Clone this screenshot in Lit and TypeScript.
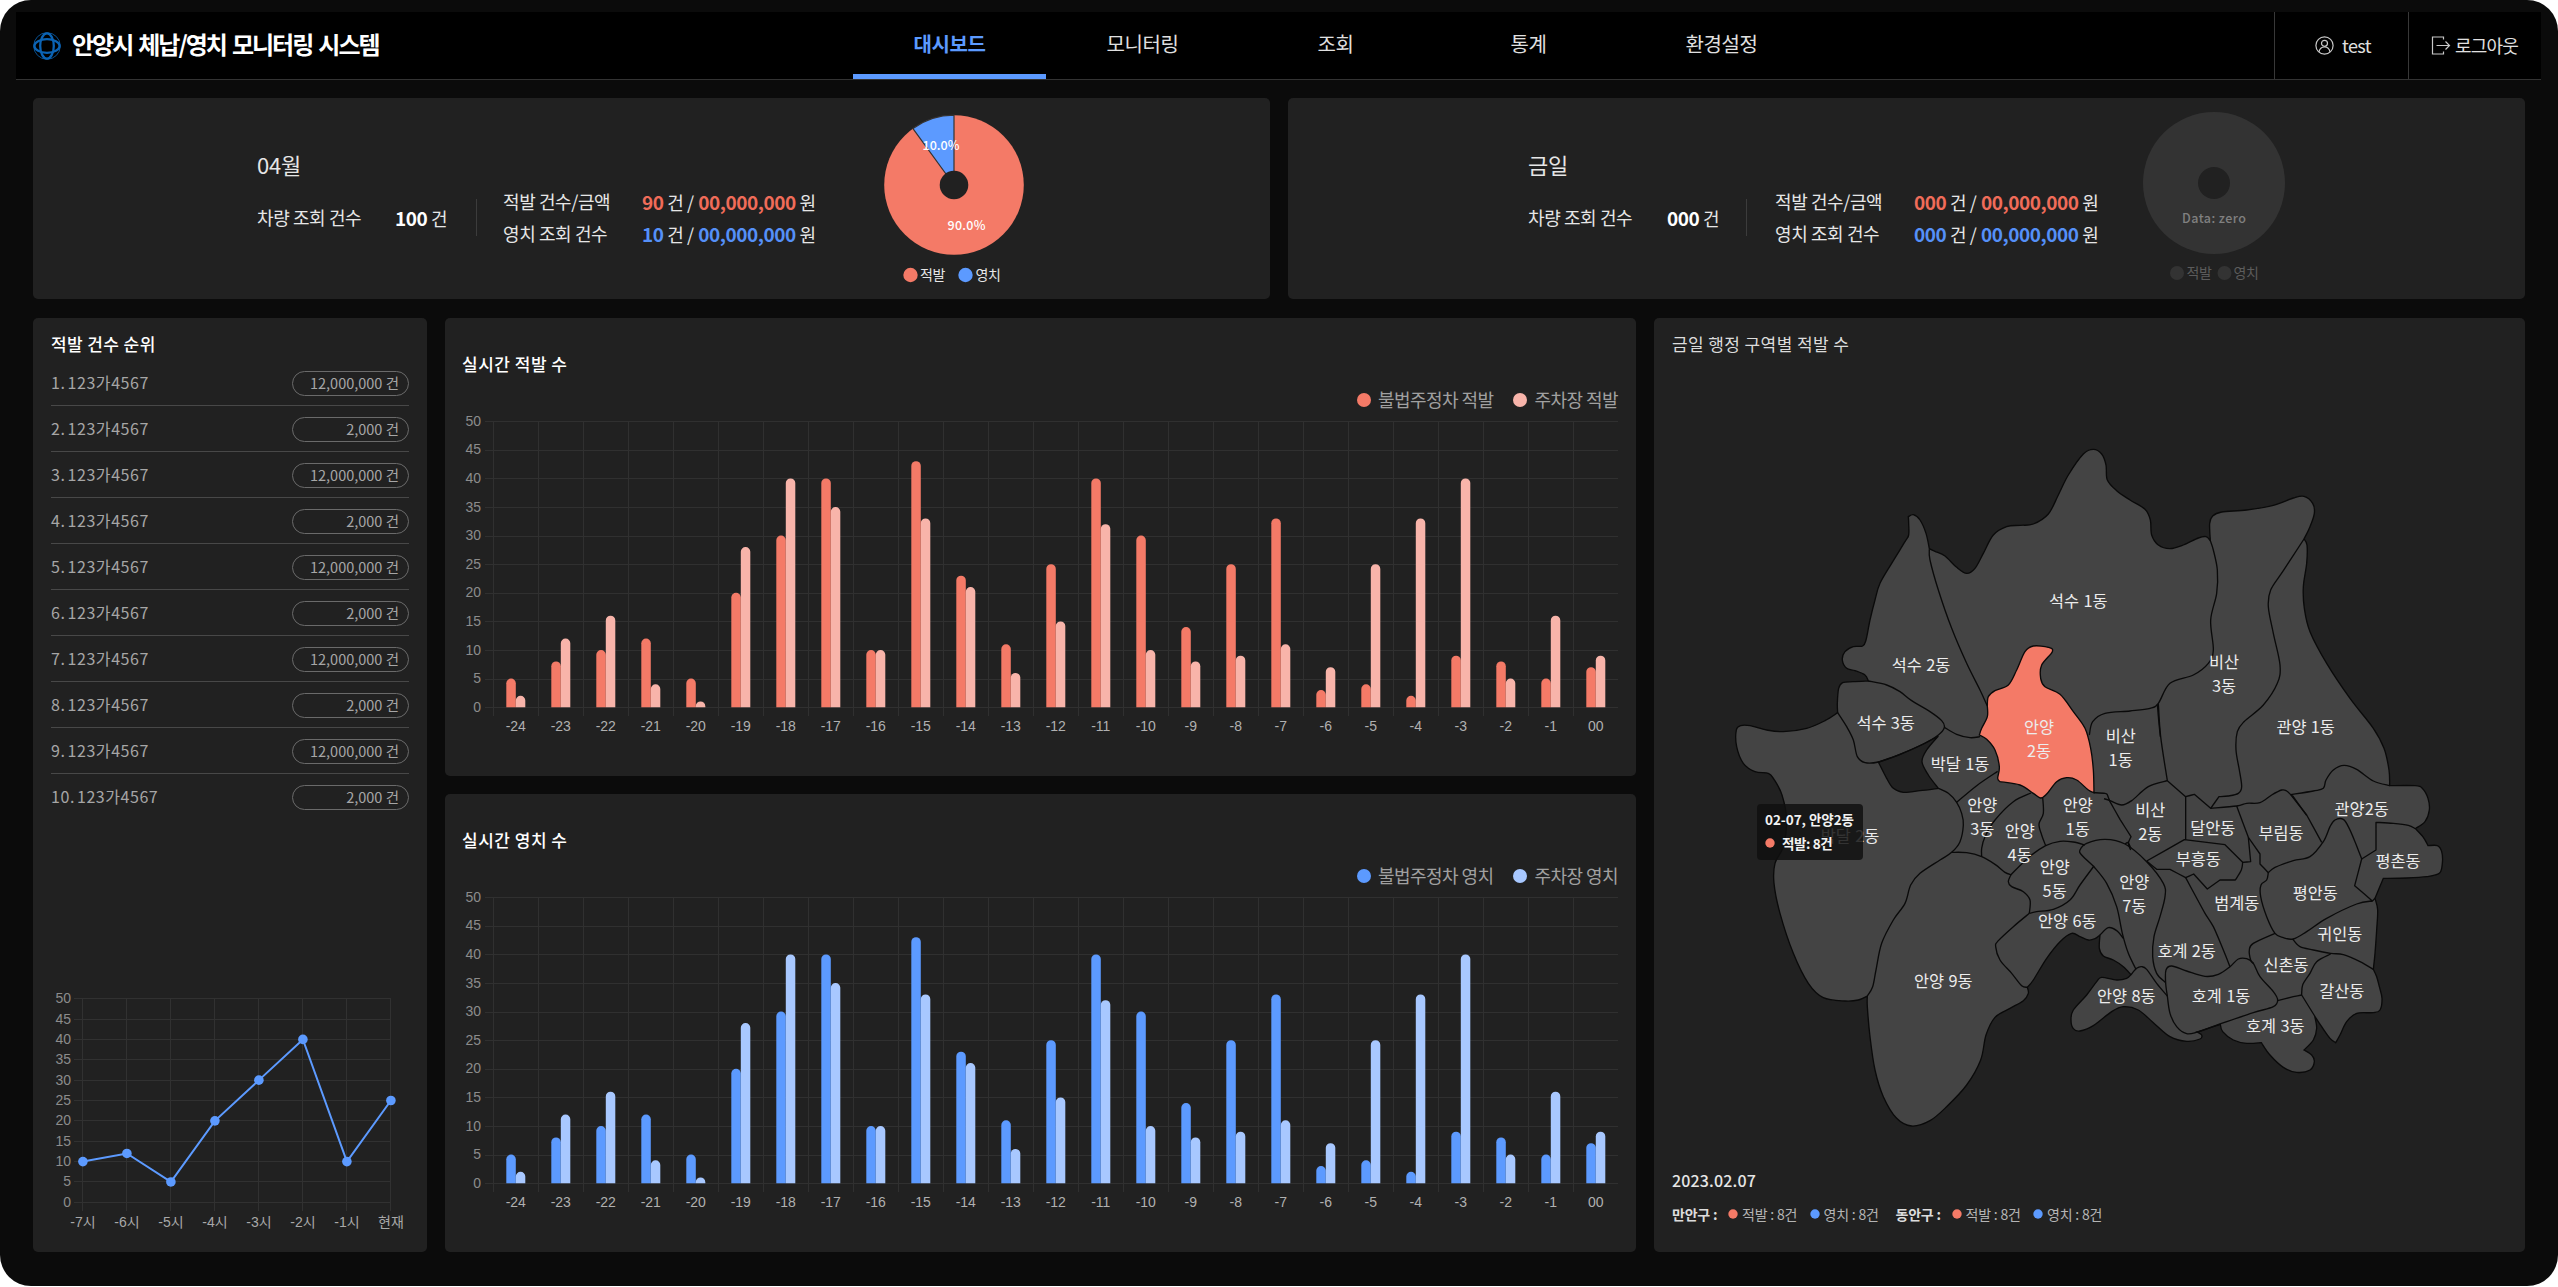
import { LitElement, html, svg, css } from "lit";
import { customElement, property } from "lit/decorators.js";
import { classMap } from "lit/directives/class-map.js";

const RED = "#f47a67";
const PINK = "#f8b4aa";
const BLUE = "#5c9aff";
const SKY = "#a8c8ff";

const base = css`
  :host {
    display: block;
    box-sizing: border-box;
    font-family: "Noto Sans CJK KR", "Noto Sans", sans-serif;
  }
  * {
    box-sizing: border-box;
  }
  svg {
    display: block;
  }
`;

/* ---------- bar chart card ---------- */

const HOURLY: [number, number][] = [
  [5, 2], [8, 12], [10, 16], [12, 4], [5, 1], [20, 28], [30, 40], [40, 35], [10, 10],
  [43, 33], [23, 21], [11, 6], [25, 15], [40, 32], [30, 10], [14, 8], [25, 9], [33, 11],
  [3, 7], [4, 25], [2, 33], [9, 40], [8, 5], [5, 16], [7, 9],
];

const TICKS = [0, 5, 10, 15, 20, 25, 30, 35, 40, 45, 50];

@customElement("bar-card")
class BarCard extends LitElement {
  @property() heading = "";
  @property({ attribute: false }) names: string[] = [];
  @property({ attribute: false }) colors: string[] = [];

  static styles = [
    base,
    css`
      :host {
        background: #212121;
        border-radius: 5px;
        padding: 34px 18px 0;
        height: 458px;
      }
      .title {
        font-size: 17px;
        line-height: 24px;
        letter-spacing: 0.5px;
        margin-left: -1px;
        font-weight: 500;
        color: #fff;
      }
      .legend {
        margin-top: 11px;
        margin-bottom: 1px;
        height: 25px;
        display: flex;
        justify-content: flex-end;
        gap: 20px;
        color: #a0a0a0;
        font-size: 18px;
        line-height: 25px;
        letter-spacing: -0.55px;
      }
      .key {
        display: flex;
        align-items: center;
        gap: 7px;
      }
      .axis {
        font-family: "Liberation Sans", Arial, sans-serif;
        font-size: 14px;
      }
    `,
  ];

  render() {
    const y = (v: number) => 294.2 - v * 5.72;
    const step = 1125 / 25;
    const bar = (x: number, v: number, fill: string) => {
      const t = y(v);
      const r = Math.min(4.7, 294.2 - t);
      return svg`<path fill=${fill} d=${`M${x} 294.2V${t + r}a${r} ${r} 0 0 1 ${r} ${-r}h${9.5 - 2 * r}a${r} ${r} 0 0 1 ${r} ${r}V294.2z`}></path>`;
    };
    return html`
      <div class="title">${this.heading}</div>
      <div class="legend">
        ${this.names.map(
          (n, i) => html`<span class="key"
            ><svg width="14" height="14"><circle cx="7" cy="7" r="7" fill=${this.colors[i]}></circle></svg>${n}</span
          >`
        )}
      </div>
      <svg width="1155" height="330">
        ${TICKS.map(
          (t) => svg`
          <path d=${`M22 ${Math.round(y(t)) + 0.5}H1155`} stroke="#303030"></path>
          <text class="axis" x="18" y=${y(t) + 4.5} text-anchor="end" fill="#8c8c8c">${t}</text>`
        )}
        ${HOURLY.map((d, i) => {
          const x = 30.3 + i * step;
          const label = i === 24 ? "00" : String(i - 24);
          return svg`
          <path d=${`M${Math.round(x) + 0.5} 8V303`} stroke="#303030"></path>
          ${bar(x + step / 2 - 9.5, d[0], this.colors[0])}
          ${bar(x + step / 2, d[1], this.colors[1])}
          <text class="axis" x=${x + step / 2} y="318" text-anchor="middle" fill="#b0b0b0">${label}</text>`;
        })}
      </svg>
    `;
  }
}

/* ---------- summary card ---------- */

@customElement("summary-card")
class SummaryCard extends LitElement {
  @property() heading = "";
  @property() total = "";
  @property() caught = "";
  @property() seized = "";
  @property({ type: Boolean }) empty = false;

  static styles = [
    base,
    css`
      :host {
        background: #212121;
        border-radius: 5px;
        height: 201px;
      }
      .card {
        display: flex;
        padding-left: 224px;
        color: #e6e6e6;
      }
      .card.empty {
        padding-left: 240px;
      }
      .info {
        width: 612px;
        padding-top: 51px;
      }
      .empty .info {
        width: 601px;
      }
      .month {
        font-size: 22px;
        line-height: 30px;
        letter-spacing: -0.2px;
      }
      .stats {
        margin-top: 5px;
        height: 66px;
        display: flex;
        align-items: center;
        font-size: 18px;
        letter-spacing: -0.4px;
        white-space: pre;
      }
      .label {
        width: 138px;
      }
      .total {
        width: 81px;
      }
      .empty .label {
        width: 139px;
      }
      .empty .total {
        width: 79px;
      }
      .rows {
        display: grid;
        grid-template-columns: 139px auto;
        line-height: 31px;
        padding-top: 1px;
      }
      .rule {
        width: 1px;
        height: 37px;
        background: #3c3c3c;
        margin-right: 26px;
      }
      .empty .rule {
        margin-right: 28px;
      }
      b {
        font-size: 19px;
        letter-spacing: -0.45px;
        font-weight: 700;
      }
      .rows b + b {
        margin-left: 1px;
      }
      .total b {
        color: #fff;
      }
      .red {
        color: #f06c59;
      }
      .blue {
        color: #5590f8;
      }
      .pct {
        font-size: 12.5px;
        font-weight: 500;
      }
      .key {
        font-size: 14px;
        letter-spacing: -0.3px;
      }
    `,
  ];

  private pie() {
    if (this.empty) {
      return svg`
        <circle cx="85" cy="85" r="71" fill="#333"></circle>
        <circle cx="85" cy="85" r="16" fill="#212121"></circle>
        <text class="pct" x="85" y="125" text-anchor="middle" fill="#808080" textLength="64">Data: zero</text>
        <circle cx="48" cy="175" r="7" fill="#333"></circle>
        <text class="key" x="57.500" y="179.500" fill="#5c5c5c">적발</text>
        <circle cx="95.500" cy="175" r="7" fill="#333"></circle>
        <text class="key" x="104.500" y="179.500" fill="#5c5c5c">영치</text>`;
    }
    const a = (36 * Math.PI) / 180;
    const px = 85 - 69.8 * Math.sin(a);
    const py = 87 - 69.8 * Math.cos(a);
    return svg`
      <circle cx="85" cy="87" r="69.800" fill=${RED}></circle>
      <path d=${`M85 87V17.2A69.8 69.8 0 0 0 ${px} ${py}z`} fill=${BLUE} stroke="#333" stroke-width="1.200"></path>
      <circle cx="85" cy="87" r="14.300" fill="#212121"></circle>
      <text class="pct" x="72" y="52" text-anchor="middle" fill="#fff" textLength="37">10.0%</text>
      <text class="pct" x="97.500" y="131.500" text-anchor="middle" fill="#fff" textLength="38">90.0%</text>
      <circle cx="41.500" cy="177" r="7.200" fill=${RED}></circle>
      <text class="key" x="51" y="181.500" fill="#e6e6e6">적발</text>
      <circle cx="96.500" cy="177" r="7.200" fill=${BLUE}></circle>
      <text class="key" x="106.500" y="181.500" fill="#e6e6e6">영치</text>`;
  }

  render() {
    return html`
      <div class=${classMap({ card: true, empty: this.empty })}>
        <div class="info">
          <div class="month">${this.heading}</div>
          <div class="stats">
            <span class="label">차량 조회 건수</span><span class="total"><b>${this.total}</b> 건</span
            ><span class="rule"></span>
            <div class="rows">
              <span>적발 건수/금액</span
              ><span><b class="red">${this.caught}</b> 건 / <b class="red">00,000,000</b> 원</span
              ><span>영치 조회 건수</span
              ><span><b class="blue">${this.seized}</b> 건 / <b class="blue">00,000,000</b> 원</span>
            </div>
          </div>
        </div>
        <svg width="170" height="200">${this.pie()}</svg>
      </div>
    `;
  }
}

/* ---------- ranking card ---------- */

@customElement("rank-card")
class RankCard extends LitElement {
  static styles = [
    base,
    css`
      :host {
        display: flex;
        flex-direction: column;
        background: #212121;
        border-radius: 5px;
        padding: 14px 18px 22px;
      }
      .title {
        font-size: 17px;
        line-height: 24px;
        letter-spacing: 0.4px;
        font-weight: 500;
        color: #fff;
        margin-bottom: 4px;
      }
      .row {
        height: 46px;
        padding-top: 2px;
        display: flex;
        align-items: center;
        justify-content: space-between;
        border-bottom: 1px solid #484848;
        color: #a6a6a6;
        font-size: 16px;
        letter-spacing: 0.55px;
        word-spacing: -2px;
      }
      .row:last-of-type {
        border-bottom-color: transparent;
      }
      .plate {
        margin-top: -3px;
      }
      .pill {
        width: 117px;
        height: 25px;
        border: 1px solid #6a6a6a;
        border-radius: 13px;
        padding-right: 9px;
        font-size: 14.5px;
        line-height: 22px;
        text-align: right;
        letter-spacing: 0;
        word-spacing: 0;
      }
      .chart {
        margin-top: auto;
      }
      .axis {
        font-family: "Liberation Sans", "Noto Sans CJK KR", sans-serif;
        font-size: 14px;
      }
    `,
  ];

  render() {
    const y = (v: number) => 212.3 - v * 4.072;
    const x = (i: number) => 31.9 + i * 44;
    const data = [10, 12, 5, 20, 30, 40, 10, 25];
    const names = ["-7시", "-6시", "-5시", "-4시", "-3시", "-2시", "-1시", "현재"];
    return html`
      <div class="title">적발 건수 순위</div>
      <div>
        ${Array.from(
          { length: 10 },
          (_, i) => html`<div class="row">
            <span class="plate">${i + 1}. 123가4567</span><span class="pill">${i % 2 ? "2,000" : "12,000,000"} 건</span>
          </div>`
        )}
      </div>
      <svg class="chart" width="358" height="240" overflow="visible">
        ${TICKS.map(
          (t) => svg`
          <path d=${`M23 ${Math.round(y(t) - 0.5) + 0.5}H340`} stroke="#313131"></path>
          <text class="axis" x="20" y=${y(t) + 4.5} text-anchor="end" fill="#8c8c8c">${t}</text>`
        )}
        ${names.map(
          (n, i) => svg`
          <path d=${`M${Math.round(x(i) - 0.5) + 0.5} 8V221`} stroke="#313131"></path>
          <text class="axis" x=${x(i)} y="237" text-anchor="middle" fill="#a8a8a8">${n}</text>`
        )}
        <polyline points=${data.map((v, i) => `${x(i)},${y(v)}`).join(" ")} fill="none" stroke=${BLUE} stroke-width="2"></polyline>
        ${data.map((v, i) => svg`<circle cx=${x(i)} cy=${y(v)} r="4.800" fill=${BLUE}></circle>`)}
      </svg>
    `;
  }
}

/* ---------- district map ---------- */

/* Curves run smoothly through their points; "|" starts a new piece at a corner. */
function curve(source: string, dx = 0, dy = 0, close = false): string {
  const pieces = source.split("|").map((part) =>
    part
      .trim()
      .split(/\s+/)
      .map((p) => {
        const [a, b] = p.split(",").map(Number);
        return [a + dx, b + dy];
      })
  );
  let out = "";
  let last: number[] | null = null;
  for (const piece of pieces) {
    const pts: number[][] = last ? [last, ...piece] : piece;
    if (!last) out += `M${pts[0]}`;
    for (let i = 0; i < pts.length - 1; i++) {
      const p0 = pts[i - 1] ?? pts[i];
      const p1 = pts[i];
      const p2 = pts[i + 1];
      const p3 = pts[i + 2] ?? p2;
      const k = 6;
      out += `C${p1[0] + (p2[0] - p0[0]) / k},${p1[1] + (p2[1] - p0[1]) / k} ${p2[0] - (p3[0] - p1[0]) / k},${p2[1] - (p3[1] - p1[1]) / k} ${p2[0]},${p2[1]}`;
    }
    last = pts[pts.length - 1];
  }
  return close ? out + "z" : out;
}

const LAND = `625,290 640,284 660,300 678,340 688,386 | 705,394 735,408 770,442 800,460 825,445 850,400 880,345 920,320
960,316 1000,312 1045,282 1075,225 1105,165 1150,102 1180,88 1205,102 1218,135 1222,180 1250,212 1290,240 1335,268
1351,300 1355,345 1375,375 1410,386 1450,375 1495,354 1518,350 1531,362 | 1529,310 1538,288 1565,276 1640,270 1720,256
1780,234 1812,229 1838,250 1843,280 1830,320 1812,357 | 1821,375 1820,430 1810,500 1813,565 1830,635 1880,730 1950,835
2020,925 2052,985 2067,1050 2069,1097 | 2145,1097 2168,1106 2184,1135 2188,1170 2175,1205 2146,1226 | 2170,1252 2184,1277 |
2212,1277 2225,1295 2227,1330 2218,1360 2180,1370 2120,1374 2050,1375 | 2025,1435 | 2033,1470 2030,1530 2025,1600 2020,1648 |
2030,1670 2038,1700 2046,1735 2040,1770 2020,1778 1970,1780 1940,1805 1920,1845 1907,1868 | 1890,1855 1865,1820 1844,1788 |
1850,1825 1840,1860 1812,1890 | 1835,1905 1843,1925 1830,1950 1790,1957 1750,1942 1710,1905 1684,1868 | 1640,1870 1600,1860
1568,1835 1561,1813 | 1492,1836 | 1505,1845 1500,1857 1460,1864 1410,1850 1360,1808 1315,1770 1270,1760 1235,1775 1180,1817
1140,1833 1120,1826 1113,1800 1120,1770 1160,1725 1190,1685 1205,1672 1250,1680 1280,1675 1293,1664 | 1270,1640 1240,1620
1210,1608 1198,1585 1200,1545 | 1185,1556 1165,1560 1140,1550 1115,1540 1080,1565 1040,1615 1000,1680 982,1702 | 985,1720
970,1742 930,1765 885,1792 858,1845 842,1920 800,1995 740,2060 690,2102 635,2118 590,2095 550,2030 525,1950 510,1850
502,1760 502,1728 | 475,1740 435,1743 370,1733 325,1690 280,1600 240,1480 222,1390 225,1330 250,1280 260,1200 246,1125
222,1078 205,1060 165,1055 130,1030 110,980 109,930 122,917 150,917 200,930 250,935 320,925 375,902 413,878 | 412,850
416,805 428,788 460,785 505,783 | 495,765 465,752 440,745 427,720 435,695 460,680 488,678 498,660 510,600 525,540 540,490
575,430 615,365 626,345 626,310 625,290`;

const GAP = `715,948 680,990 666,1025 685,1065 715,1105 | 660,1112 610,1117 580,1105 560,1075 535,1026 | 600,1003 670,972 715,948`;

const ACTIVE = `862,858 865,830 885,812 925,795 950,750 975,695 1000,678 1045,682 1057,695 1025,735 1022,775 1035,800 1080,823
1120,875 1155,925 1172,985 1180,1050 1182,1118 | 1165,1110 1130,1080 1100,1073 1070,1085 1040,1122 1022,1134 1000,1120
960,1095 900,1085 | 893,1075 898,1040 885,990 860,958 838,945 | 845,925 862,890 862,858`;

/* Map sheets: offset, borders, labels ("text,x,y", "/" breaks a line). */
const SHEETS: { dx: number; dy: number; borders: string[]; labels: [string, number, number][] }[] = [
  {
    dx: 0,
    dy: 0,
    borders: [
      "688,388 690,420 715,510 755,625 800,730 840,810 862,858",
      "505,783 560,795 600,815 635,842 690,875 725,902 733,922 715,945 670,972 600,1003 535,1026 495,1028 472,1010 460,960 440,920 413,878",
      "733,922 770,943 810,953 840,950",
      "715,1105 745,1120 770,1147 785,1180 790,1215 780,1265 755,1297 720,1320 660,1360 632,1395 615,1450 580,1500 545,1570 528,1650 518,1700 502,1728",
      "770,1147 830,1097 893,1054",
    ],
    labels: [
      ["석수 1동", 1135, 545],
      ["석수 2동", 663, 737],
      ["석수 3동", 557, 910],
      ["박달 1동", 780, 1034],
      ["안양/2동", 1017, 923],
    ],
  },
  {
    dx: 1140,
    dy: 0,
    borders: [
      "28,945 38,905 75,880 150,873 210,865 235,850 270,790 340,765 385,730 400,690 392,600 410,520 412,450 400,390 391,362",
      "235,850 242,950 262,1082",
      "232,852 236,900 241,950",
      "392,1165 | 417,1130 | 445,1128 475,1120 485,1100 478,1050 468,990 472,935 492,905 550,855 592,790 600,735 580,640 565,560 572,510 610,452 672,357",
      "632,1124 | 700,1113 730,1105 738,1080 760,1050 792,1036 830,1048 880,1083 929,1097",
    ],
    labels: [
      ["비산/1동", 122, 950],
      ["비산/3동", 432, 728],
      ["관양 1동", 677, 922],
    ],
  },
  {
    dx: 0,
    dy: 1080,
    borders: [
      "993,39 940,65 885,120 855,170 845,205 845,230",
      "755,217 800,218 845,230 885,253 915,277 933,284",
      "933,284 985,233 1037,197 1080,184 1120,186 1155,195",
      "1028,52 1030,100 1017,132 1025,165 1037,197",
      "933,284 925,305 935,320 970,335 990,360 988,400",
      "988,400 940,440 895,482 887,500 900,540 935,580 965,617 982,622",
      "988,400 1010,395 1060,388 1110,360 1140,315 1182,258",
    ],
    labels: [
      ["박달 2동", 450, 171],
      ["안양/3동", 847, 77],
      ["안양/1동", 1133, 77],
      ["안양/4동", 959, 156],
      ["안양/5동", 1064, 262],
      ["안양 6동", 1102, 425],
      ["안양 9동", 730, 604],
    ],
  },
  {
    dx: 1140,
    dy: 1080,
    borders: [
      "40,38 75,40 82,44 | 90,65 | 120,118 | 153,170 | 145,190 152,210",
      "72,56 | 90,62 125,75 155,62 205,20 262,2 | 317,50 | 343,43 | 392,85 | 470,78 500,70 540,68 575,45 605,30 620,33 632,44 | 680,105 | 725,187",
      "637,46 | 680,106",
      "317,50 | 317,179",
      "40,258 5,225 0,210 20,190 75,178 135,192 200,245 250,310 255,350 240,410 222,470 218,530 230,580 257,608",
      "40,258 80,310 110,380 127,460 145,520 168,568",
      "60,465 85,443 110,452 130,475",
      "135,192 145,188 152,205",
      "153,584 170,565 185,560 200,568 230,610 262,648",
      "262,648 257,610 258,570 275,558 320,573 375,589 415,583 450,560 475,537 500,536 520,550 540,590 580,635 593,660 580,680 520,698 420,732 352,756 320,761 290,740 270,700 262,648",
      "317,293 345,345 375,400 400,440 430,510 450,560",
      "200,243 | 313,179 | 435,194 | 488,247 | 484,270 466,300 | 420,300 | 382,327 | 341,282 | 317,293 | 270,268 | 230,268 | 200,243",
      "470,78 | 505,172 | 512,245 | 488,247",
      "505,172 | 540,222 | 540,252 | 565,278",
      "565,278 585,262 640,242 690,230 730,185 750,140 765,120 790,118 805,140 825,185 845,237 | 824,317 | 877,363 | 830,372 740,415 680,455 640,477 610,473 585,460 560,410 542,350 543,315 560,300 565,278",
      "845,237 | 888,210 | 888,127 | 940,130 985,136 1006,146",
      "877,363 | 885,355",
      "585,460 | 520,490 508,510 512,540 520,550",
      "638,477 660,500 700,510 752,520 790,524 840,545 880,568",
      "752,522 710,545 690,580 668,615 665,645 | 704,708",
      "593,662 | 640,650 | 665,645",
    ],
    labels: [
      ["비산/2동", 211, 93],
      ["달안동", 398, 146],
      ["부림동", 603, 160],
      ["관양2동", 845, 88],
      ["평촌동", 954, 246],
      ["부흥동", 355, 238],
      ["안양/7동", 163, 308],
      ["범계동", 470, 370],
      ["평안동", 706, 341],
      ["귀인동", 779, 465],
      ["신촌동", 618, 558],
      ["호계 2동", 320, 514],
      ["안양 8동", 139, 649],
      ["호계 1동", 423, 650],
      ["갈산동", 785, 634],
      ["호계 3동", 586, 740],
    ],
  },
];

@customElement("map-card")
class MapCard extends LitElement {
  static styles = [
    base,
    css`
      :host {
        position: relative;
        background: #212121;
        border-radius: 5px;
        padding: 14px 18px 0;
      }
      .title {
        font-size: 17px;
        line-height: 24px;
        letter-spacing: 0.4px;
        color: #dcdcdc;
      }
      .place {
        font-size: 49px;
        letter-spacing: 0;
        word-spacing: 2px;
        fill: #ececec;
        text-anchor: middle;
      }
      .line {
        fill: none;
        stroke: #0a0a0a;
        stroke-width: 4;
        stroke-linejoin: round;
      }
      .date {
        margin-top: 8px;
        font-size: 16px;
        line-height: 24px;
        letter-spacing: 0.15px;
        font-weight: 500;
        color: #e6e6e6;
      }
      .legend {
        margin-top: 12px;
        display: flex;
        align-items: center;
        font-size: 14px;
        line-height: 20px;
        letter-spacing: -0.2px;
        color: #b4b4b4;
      }
      .gu {
        font-weight: 700;
        color: #dcdcdc;
        width: 56px;
      }
      .key {
        display: flex;
        align-items: center;
        gap: 4px;
        width: 81.5px;
      }
      .key.end {
        width: 86px;
      }
      .tip {
        position: absolute;
        left: 103px;
        top: 486px;
        width: 106px;
        height: 56px;
        border-radius: 4px;
        background: rgba(15, 15, 15, 0.84);
        color: #f2f2f2;
        font-size: 13.5px;
        font-weight: 700;
        line-height: 24px;
        letter-spacing: -0.05px;
        padding: 3px 8px;
        white-space: nowrap;
      }
      .tiprow {
        display: flex;
        align-items: center;
        gap: 7px;
        letter-spacing: -0.4px;
      }
    `,
  ];

  private key(fill: string, text: string, end = false) {
    return html`<span class=${classMap({ key: true, end })}
      ><svg width="10" height="10"><circle cx="5" cy="5" r="4.7" fill=${fill}></circle></svg>${text}</span
    >`;
  }

  render() {
    return html`
      <div class="title">금일 행정 구역별 적발 수</div>
      <svg width="835" height="804" viewBox="-84 -192 2505 2412">
        <path d=${curve(LAND, 0, 0, true)} fill="#444" stroke="#0a0a0a" stroke-width="4"></path>
        <path d=${curve(GAP, 0, 0, true)} fill="#212121" stroke="#0a0a0a" stroke-width="4"></path>
        ${SHEETS.map((s) => s.borders.map((b) => svg`<path class="line" d=${curve(b, s.dx, s.dy)}></path>`))}
        <path d=${curve(ACTIVE, 0, 0, true)} fill=${RED} stroke="#0a0a0a" stroke-width="4"></path>
        ${SHEETS.map((s) =>
          s.labels.map(([t, x, y]) =>
            t
              .split("/")
              .map((line, i) => svg`<text class="place" x=${x + s.dx} y=${y + s.dy + 16 + i * 72}>${line}</text>`)
          )
        )}
      </svg>
      <div class="date">2023.02.07</div>
      <div class="legend">
        <span class="gu">만안구 :</span>${this.key(RED, "적발 : 8건")}${this.key(BLUE, "영치 : 8건", true)}
        <span class="gu">동안구 :</span>${this.key(RED, "적발 : 8건")}${this.key(BLUE, "영치 : 8건")}
      </div>
      <div class="tip">
        <div>02-07, 안양2동</div>
        <div class="tiprow">
          <svg width="10" height="10"><circle cx="5" cy="5" r="4.700" fill=${RED}></circle></svg>적발: 8건
        </div>
      </div>
    `;
  }
}

/* ---------- page ---------- */

@customElement("app-root")
class AppRoot extends LitElement {
  static styles = [
    base,
    css`
      .page {
        height: 1286px;
        background: #0b0b0b;
        border-radius: 31px;
        overflow: hidden;
        padding-top: 12px;
      }
      header {
        margin: 0 17px 0 16px;
        height: 68px;
        background: #000;
        border-bottom: 1px solid #333;
        display: grid;
        grid-template-columns: 837px 965px 1fr;
      }
      .brand {
        display: flex;
        align-items: center;
        gap: 11px;
        padding-left: 17px;
        color: #fff;
        font-size: 24px;
        font-weight: 700;
        letter-spacing: -2px;
        word-spacing: 2.6px;
        white-space: nowrap;
      }
      .brand span {
        position: relative;
        top: -2px;
      }
      .brand svg {
        position: relative;
        top: 0.5px;
      }
      nav {
        display: grid;
        grid-template-columns: repeat(5, 193px);
      }
      .tab {
        height: 67px;
        text-align: center;
        font-size: 20px;
        line-height: 64px;
        letter-spacing: -0.4px;
        color: #e0e0e0;
      }
      .tab.on {
        color: #5c9aff;
        font-weight: 700;
        box-shadow: inset 0 -5px #5c9aff;
      }
      .user {
        display: flex;
        justify-content: flex-end;
        color: #e0e0e0;
        font-size: 18px;
        line-height: 24px;
        letter-spacing: -0.6px;
      }
      .cell {
        width: 134px;
        border-left: 1px solid #383838;
        display: flex;
        align-items: center;
        padding-left: 40px;
        gap: 8px;
      }
      .cell span {
        margin-top: -2px;
      }
      .cell.out {
        width: 133px;
        padding-left: 22px;
        gap: 4px;
        letter-spacing: -0.8px;
        white-space: nowrap;
      }
      main {
        padding: 18px 33px 0;
      }
      .top {
        display: grid;
        grid-template-columns: 1fr 1fr;
        gap: 18px;
      }
      .bottom {
        margin-top: 19px;
        height: 934px;
        display: grid;
        grid-template-columns: 394px 1191px 871px;
        gap: 18px;
      }
      .bars {
        display: grid;
        grid-template-rows: 458px 458px;
        gap: 18px;
      }
    `,
  ];

  render() {
    const tabs = ["대시보드", "모니터링", "조회", "통계", "환경설정"];
    return html`
      <div class="page">
        <header>
          <div class="brand">
            <svg width="28" height="28" viewBox="0 0 28 28" fill="none" stroke="#0b63b4">
              <circle cx="14" cy="14" r="13.300" stroke-width="0.800"></circle>
              <ellipse cx="14" cy="14" rx="6.800" ry="12.600" stroke-width="2.300"></ellipse>
              <ellipse cx="14" cy="14" rx="12.600" ry="6.800" stroke-width="2.300"></ellipse>
            </svg>
            <span>안양시 체납/영치 모니터링 시스템</span>
          </div>
          <nav>${tabs.map((t, i) => html`<div class=${classMap({ tab: true, on: i === 0 })}>${t}</div>`)}</nav>
          <div class="user">
            <div class="cell">
              <svg width="19" height="19" viewBox="0 0 19 19" fill="none" stroke="#c8c8c8" stroke-width="1.200">
                <circle cx="9.500" cy="9.500" r="8.600"></circle>
                <circle cx="9.500" cy="7.300" r="3"></circle>
                <path d="M4 16c.6-3.300 2.700-5 5.500-5s4.900 1.700 5.500 5"></path>
              </svg>
              <span>test</span>
            </div>
            <div class="cell out">
              <svg width="20" height="19" viewBox="0 0 20 19" fill="none" stroke="#c8c8c8" stroke-width="1.200">
                <path d="M12.500 3.500V1H1.500v17h11v-2.500M5.500 9.500h13M14.500 5.500l4 4-4 4"></path>
              </svg>
              <span>로그아웃</span>
            </div>
          </div>
        </header>
        <main>
          <div class="top">
            <summary-card heading="04월" total="100" caught="90" seized="10"></summary-card>
            <summary-card heading="금일" total="000" caught="000" seized="000" empty></summary-card>
          </div>
          <div class="bottom">
            <rank-card></rank-card>
            <div class="bars">
              <bar-card heading="실시간 적발 수" .names=${["불법주정차 적발", "주차장 적발"]} .colors=${[RED, PINK]}></bar-card>
              <bar-card heading="실시간 영치 수" .names=${["불법주정차 영치", "주차장 영치"]} .colors=${[BLUE, SKY]}></bar-card>
            </div>
            <map-card></map-card>
          </div>
        </main>
      </div>
    `;
  }
}
